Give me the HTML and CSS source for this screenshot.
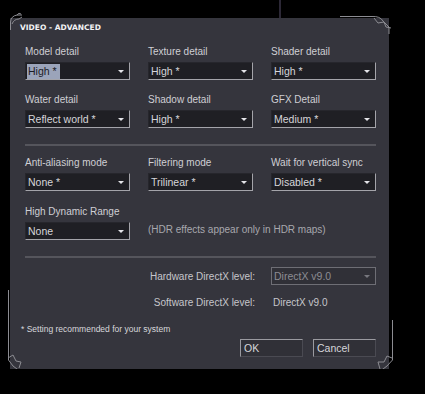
FILE: index.html
```html
<!DOCTYPE html>
<html lang="en">
<head>
  <meta charset="UTF-8" />
  <title>Video - Advanced</title>
  <link rel="stylesheet" href="styles.css">
</head>
<body>

  <div class="dialog">
    <div class="streak"></div>
    <svg class="ornaments" width="425" height="394" viewBox="0 0 425 394">
      <g fill="none" stroke="#8c8c92" stroke-width="1">
        <!-- top left -->
        <path d="M10.5 30 L10.5 22 Q11 16 17 15 L22 15" />
        <path d="M12 24 Q14 19 19 19 L22 17" />
        <path d="M17 15 Q19 12 21 14" />
        <!-- top right -->
        <path d="M340 16.5 L372 16.5 Q380 16 383 21 L389 27 L389 34" />
        <path d="M374 18 L378 23 L384 22 L386 27 L391 28" />
        <!-- bottom left -->
        <path d="M8.5 290 L8.5 360 L13 366 L19 370.5 L58 370.5" />
        <path d="M8 358 L13 355 L16 361 L21 362 L19 368" />
        <!-- bottom right -->
        <path d="M392.5 320 L392.5 360 L387 366 L381 370.5 L368 370.5" />
        <path d="M392 358 L387 356 L384 362 L378 362 L380 369" />
      </g>
    </svg>

    <div class="title">VIDEO - ADVANCED</div>

    <div class="fields">
      <div class="field">
        <label>Model detail</label>
        <div class="select"><span class="picked">High *</span><i class="arrow"></i></div>
      </div>
      <div class="field">
        <label>Texture detail</label>
        <div class="select"><span>High *</span><i class="arrow"></i></div>
      </div>
      <div class="field">
        <label>Shader detail</label>
        <div class="select"><span>High *</span><i class="arrow"></i></div>
      </div>
      <div class="field">
        <label>Water detail</label>
        <div class="select"><span>Reflect world *</span><i class="arrow"></i></div>
      </div>
      <div class="field">
        <label>Shadow detail</label>
        <div class="select"><span>High *</span><i class="arrow"></i></div>
      </div>
      <div class="field">
        <label>GFX Detail</label>
        <div class="select"><span>Medium *</span><i class="arrow"></i></div>
      </div>
    </div>

    <div class="divider"></div>

    <div class="fields second">
      <div class="field">
        <label>Anti-aliasing mode</label>
        <div class="select"><span>None *</span><i class="arrow"></i></div>
      </div>
      <div class="field">
        <label>Filtering mode</label>
        <div class="select"><span>Trilinear *</span><i class="arrow"></i></div>
      </div>
      <div class="field">
        <label>Wait for vertical sync</label>
        <div class="select"><span>Disabled *</span><i class="arrow"></i></div>
      </div>
      <div class="field">
        <label>High Dynamic Range</label>
        <div class="select"><span>None</span><i class="arrow"></i></div>
      </div>
      <div class="hdr-note">(HDR effects appear only in HDR maps)</div>
    </div>

    <div class="divider"></div>

    <div class="dx-row">
      <span class="dx-label">Hardware DirectX level:</span>
      <div class="select disabled"><span>DirectX v9.0</span><i class="arrow"></i></div>
    </div>
    <div class="dx-row software">
      <span class="dx-label">Software DirectX level:</span>
      <span class="dx-value">DirectX v9.0</span>
    </div>

    <div class="footnote">* Setting recommended for your system</div>

    <div class="buttons">
      <button>OK</button>
      <button>Cancel</button>
    </div>
  </div>

</body>
</html>
```

FILE: styles.css
```css
body {
  margin: 0;
  background-color: #000;
  font-family: "Liberation Sans", Arial, sans-serif;
  font-size: 10px;
  color: #cfcfd4;
}

.dialog {
  position: relative;
  margin: 18px 0 0 10px;
  width: 379px;
  height: 351px;
  background-color: #35353d;
  box-sizing: border-box;
  padding: 0 13px 0 15px;
}

.streak {
  position: absolute;
  left: 269px;
  top: -18px;
  width: 2px;
  height: 18px;
  background-color: #2c2836;
}

.ornaments {
  position: absolute;
  left: -10px;
  top: -18px;
  pointer-events: none;
}

.title {
  margin-left: -5px;
  padding-top: 4px;
  height: 12px;
  line-height: 12px;
  font-family: "DejaVu Sans", sans-serif;
  font-weight: bold;
  font-size: 7.5px;
  color: #f2f2f4;
}

.fields {
  display: grid;
  grid-template-columns: repeat(3, 105px);
  column-gap: 18px;
  row-gap: 13px;
  margin-top: 11px;
}

.fields.second {
  margin-top: 10px;
  row-gap: 14px;
}

.field label {
  display: block;
  height: 14px;
  line-height: 14px;
  margin-bottom: 3px;
}

.select {
  position: relative;
  height: 18px;
  box-sizing: border-box;
  background-color: #1f1f24;
  border-right: 1px solid #a4a4aa;
  border-bottom: 1px solid #a4a4aa;
  border-top: 1px solid #26262c;
  border-left: 1px solid #26262c;
  padding-left: 1px;
  line-height: 16px;
  font-size: 10.5px;
  color: #d6d6da;
}

.select span {
  padding: 0 1px;
}

.select .picked {
  display: inline-block;
  background-color: #9ba4ba;
  color: #1c1c26;
  line-height: 15px;
  padding-right: 3px;
}

.arrow {
  position: absolute;
  right: 5px;
  top: 7px;
  width: 0;
  height: 0;
  border-left: 3px solid transparent;
  border-right: 3px solid transparent;
  border-top: 3px solid #e4e4e8;
}

.select.disabled {
  width: 105px;
  background-color: #303037;
  border: 1px solid #6e6e75;
  color: #8c8c93;
}

.select.disabled .arrow {
  border-top-color: #77777e;
}

.hdr-note {
  grid-column: 2 / 4;
  align-self: end;
  height: 19px;
  line-height: 17px;
  color: #a8a8ae;
}

.divider {
  height: 2px;
  background-color: #55555c;
  margin-top: 16px;
  width: 351px;
}

.dx-row {
  display: flex;
  align-items: center;
  margin-top: 9px;
}

.dx-label {
  width: 246px;
  text-align: right;
  padding-right: 16px;
  box-sizing: border-box;
  color: #c6c6cb;
}

.dx-row.software {
  margin-top: 12px;
}

.dx-value {
  padding-left: 2px;
  color: #c6c6cb;
}

.footnote {
  margin-top: 16px;
  margin-left: -4px;
  font-size: 8.5px;
  color: #d8d8dc;
}

.buttons {
  display: flex;
  gap: 10px;
  margin: 5px 0 0 215px;
}

button {
  width: 63px;
  height: 18px;
  padding: 0 0 0 3px;
  text-align: left;
  font-family: "Liberation Sans", Arial, sans-serif;
  font-size: 10.5px;
  color: #d6d6da;
  background-color: #303037;
  border-top: 1px solid #9a9aa0;
  border-left: 1px solid #9a9aa0;
  border-right: 1px solid #4a4a52;
  border-bottom: 1px solid #4a4a52;
}
```
